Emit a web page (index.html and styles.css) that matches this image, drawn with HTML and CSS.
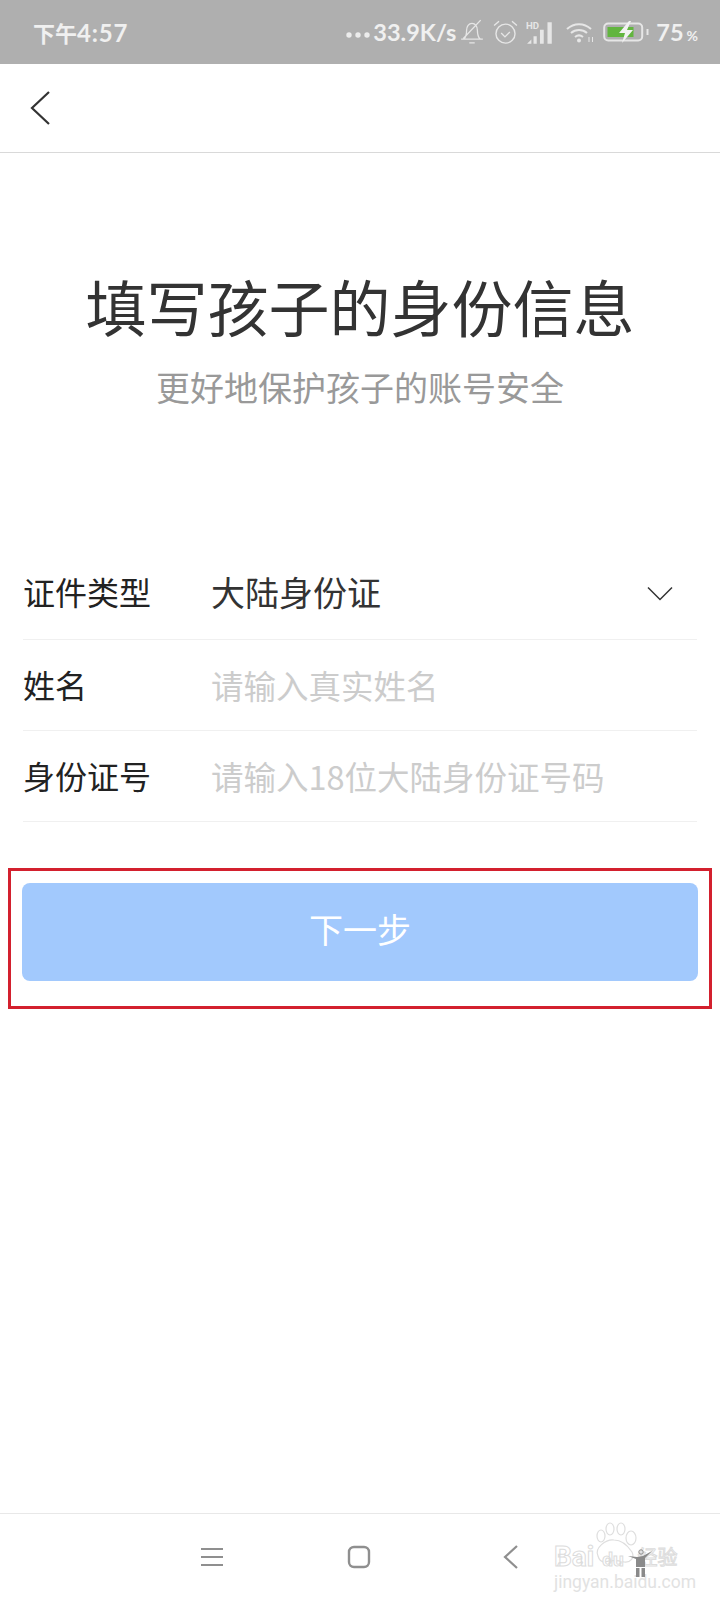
FILE: index.html
```html
<!DOCTYPE html>
<html lang="zh-CN">
<head>
  <meta charset="UTF-8">
  <meta name="viewport" content="width=device-width, initial-scale=1.0">
  <title>填写孩子的身份信息</title>
  <link rel="stylesheet" href="styles.css">
</head>
<body>
  <div class="status-bar">
    <span class="status-time">下午<span class="digits">4:57</span></span>
    <div class="status-right">
      <svg class="dots" width="24" height="8" viewBox="0 0 24 8" fill="#ececec"><circle cx="3" cy="4" r="2.700"/><circle cx="12" cy="4" r="2.700"/><circle cx="21" cy="4" r="2.700"/></svg>
      <span class="status-speed">33.9K/s</span>
      <svg class="ic-bell" width="24" height="26" viewBox="0 0 22 24" fill="none" stroke="#e6e6e6" stroke-width="1.200"><path d="M1 18.500h20M3.500 18.500c2-2 2.500-5 2.500-8 0-3.500 2-6.500 5-6.500s5 3 5 6.500c0 3 .5 6 2.500 8M8.500 22h5M3 18 19 1"/></svg>
      <svg class="ic-alarm" width="25" height="26" viewBox="0 0 23 24" fill="none" stroke="#e6e6e6" stroke-width="1.300"><circle cx="11.500" cy="13.500" r="8.800"/><path d="M7.500 13l3.500 3.500 4.500-4.500M1 6l4.500-4M22 6l-4.500-4"/></svg>
      <svg class="ic-signal" width="29" height="23" viewBox="0 0 27 21" fill="#e6e6e6"><text x="0" y="7.500" class="hd">HD</text><path d="M1 21l4-4v4zM7 14h3v7H7zM13 8h3.500v13H13zM20 1h4v20h-4z"/></svg>
      <svg class="ic-wifi" width="28" height="21" viewBox="0 0 28 21" fill="none" stroke="#e6e6e6" stroke-width="2"><path d="M1 7c7-6.500 17-6.500 24 0M5 11c4.500-4 11.500-4 16 0M9 15c2.500-2 5.500-2 8 0"/><circle cx="13" cy="18.500" r="2" fill="#e6e6e6" stroke="none"/><path d="M23 15v5M26.500 15v5" stroke-width="1"/></svg>
      <svg class="ic-batt" width="46" height="22" viewBox="0 0 46 22" fill="none"><rect x="1.200" y="2.500" width="38" height="17" rx="4" stroke="#e6e6e6" stroke-width="2"/><rect x="4.500" y="6" width="26" height="10" fill="#62b53f"/><path d="M26 0 16 12h6l-3 10 11-13h-6l4-9z" fill="#f2f2f2"/><rect x="43.500" y="8" width="2" height="6" fill="#e6e6e6"/></svg>
      <span class="status-batt">75<small>%</small></span>
    </div>
  </div>

  <div class="nav-bar">
    <svg width="24" height="36" viewBox="0 0 24 36" fill="none" stroke="#333" stroke-width="2.200"><path d="M21 2 4 18l17 16"/></svg>
  </div>

  <div class="intro">
    <h1>填写孩子的身份信息</h1>
    <p>更好地保护孩子的账号安全</p>
  </div>

  <div class="form">
    <div class="form-row form-row-first">
      <span class="form-label">证件类型</span>
      <span class="form-value">大陆身份证</span>
      <svg class="chevron" width="26" height="15" viewBox="0 0 26 15" fill="none" stroke="#333" stroke-width="1.500"><path d="M1 1.500l12 12 12-12"/></svg>
    </div>
    <div class="form-row">
      <span class="form-label">姓名</span>
      <span class="form-value placeholder">请输入真实姓名</span>
    </div>
    <div class="form-row">
      <span class="form-label">身份证号</span>
      <span class="form-value placeholder">请输入18位大陆身份证号码</span>
    </div>
  </div>

  <div class="highlight">
    <button class="btn-next">下一步</button>
  </div>

  <div class="spacer"></div>

  <div class="bottom-nav">
    <svg class="nav-menu" width="22" height="20" viewBox="0 0 22 20" stroke="#8f8f8f" stroke-width="2"><path d="M0 2h22M0 10h22M0 18h22"/></svg>
    <svg class="nav-home" width="24" height="24" viewBox="0 0 24 24" fill="none" stroke="#8f8f8f" stroke-width="2.400"><rect x="2" y="2" width="20" height="20" rx="5"/></svg>
    <svg class="nav-back" width="16" height="24" viewBox="0 0 16 24" fill="none" stroke="#8f8f8f" stroke-width="2.200"><path d="M14 1 2 12l12 11"/></svg>
    <div class="watermark">
      <svg class="wm-paw" width="44" height="44" viewBox="0 0 44 44" fill="none" stroke="#dedede" stroke-width="1.200"><ellipse cx="7" cy="14" rx="4" ry="6"/><ellipse cx="16" cy="7" rx="4" ry="6"/><ellipse cx="27" cy="7" rx="4" ry="6"/><ellipse cx="37" cy="16" rx="5" ry="7"/><path d="M4 34c-4-8 8-17 16-16 8 0 14 6 18 12 3 6-2 11-8 10-7-2-13-2-19 0-3 0-6-2-7-6z"/></svg>
      <div class="wm-top"><span>Bai</span><span class="wm-du">du</span><span class="wm-cn">经验</span></div>
      <div class="wm-url">jingyan.baidu.com</div>
      <svg class="wm-man" width="24" height="29" viewBox="0 0 24 29" fill="#8a8a8a"><path d="M0 8l9 1 6-1 9-5-7 7v9H8v-8z"/><circle cx="13" cy="4" r="2.200" fill="none" stroke="#8a8a8a"/><rect x="8" y="20" width="3.500" height="9"/><rect x="13.500" y="20" width="3.500" height="9"/></svg>
    </div>
  </div>
</body>
</html>
```

FILE: styles.css
```css
* {
  margin: 0;
  padding: 0;
  box-sizing: border-box;
}
body {
  width: 720px;
  height: 1600px;
  display: flex;
  flex-direction: column;
  background: white;
  font-family: "Noto Sans CJK SC", Roboto, sans-serif;
  overflow: hidden;
}
.status-bar {
  height: 64px;
  flex-shrink: 0;
  background: #afafaf;
  color: #f0f0f0;
  display: flex;
  justify-content: space-between;
  align-items: center;
  padding: 0 22px 0 33px;
  font-weight: 700;
}
.status-time {
  font-size: 22px;
}
.digits {
  font-family: Lato, sans-serif;
  font-size: 24px;
  letter-spacing: 0.800px;
}
.status-right {
  display: flex;
  align-items: center;
}
.status-speed,
.status-batt {
  font-size: 23.500px;
  font-family: Lato, sans-serif;
  white-space: nowrap;
}
.dots {
  margin: 6px 3px 0 0;
}
.ic-bell {
  margin-left: 4px;
}
.ic-alarm {
  margin-left: 9px;
}
.ic-signal {
  margin-left: 8px;
}
.ic-wifi {
  margin-left: 11px;
}
.ic-batt {
  margin-left: 9px;
}
.status-batt {
  margin-left: 7px;
}
.status-batt small {
  font-size: 14px;
  margin-left: 3px;
}
.hd {
  font: 700 9px Roboto, sans-serif;
}
.nav-bar {
  height: 89px;
  flex-shrink: 0;
  border-bottom: 1px solid #d9d9d9;
  display: flex;
  align-items: center;
  padding-left: 28px;
}
.intro {
  height: 395px;
  flex-shrink: 0;
  padding-top: 110px;
  text-align: center;
}
.intro h1 {
  font-size: 61px;
  line-height: 86px;
  font-weight: 400;
  color: #333;
}
.intro p {
  margin-top: 13px;
  font-size: 34px;
  line-height: 50px;
  color: #999;
}
.form {
  margin: 0 23px;
}
.form-row {
  height: 91px;
  display: flex;
  align-items: center;
  padding-bottom: 2px;
  border-bottom: 1px solid #f0f0f0;
}
.form-row-first {
  height: 92px;
  padding-bottom: 5px;
}
.form-label {
  width: 188px;
  font-size: 32px;
  color: #222;
}
.form-value {
  flex: 1;
  font-size: 34px;
  color: #333;
}
.form-value.placeholder {
  font-size: 32.500px;
  color: #ccc;
}
.chevron {
  margin: 4px 24px 0 0;
}
.highlight {
  margin: 46px 8px 0;
  height: 141px;
  border: 3px solid #d3202e;
  padding: 12px 11px 0;
}
.btn-next {
  display: block;
  width: 100%;
  height: 98px;
  border: none;
  border-radius: 8px;
  padding-bottom: 8px;
  background: #a2c9fd;
  color: white;
  font-family: inherit;
  font-size: 34px;
}
.spacer {
  flex: 1;
}
.bottom-nav {
  height: 87px;
  flex-shrink: 0;
  border-top: 1px solid #e8e8e8;
  position: relative;
  display: flex;
  align-items: center;
  padding-left: 201px;
}
.nav-home {
  margin-left: 124px;
}
.nav-back {
  margin-left: 132px;
}
.watermark {
  position: absolute;
  left: 552px;
  top: 8px;
  width: 132px;
  height: 72px;
  color: white;
}
.wm-paw {
  position: absolute;
  left: 42px;
  top: 0;
}
.wm-top {
  position: absolute;
  left: 2px;
  top: 18px;
  display: flex;
  align-items: center;
  font: 700 28px Roboto, sans-serif;
  white-space: nowrap;
  -webkit-text-stroke: 1px #dcdcdc;
}
.wm-du {
  font-size: 19px;
  margin: 6px 14px 0 8px;
}
.wm-cn {
  font: 400 20px "Noto Sans CJK SC", sans-serif;
}
.wm-url {
  position: absolute;
  left: 2px;
  top: 50px;
  font: 400 17.500px Roboto, sans-serif;
  white-space: nowrap;
  color: #e2e2e2;
}
.wm-man {
  position: absolute;
  left: 76px;
  top: 26px;
}
```
